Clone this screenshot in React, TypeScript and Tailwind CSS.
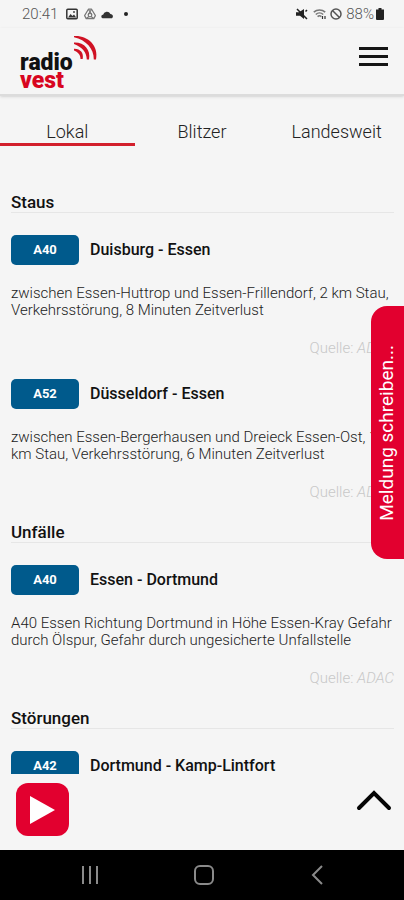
import { useState } from "react";

type Report = {
  road: string;
  route: string;
  text?: string;
};

type Section = {
  title: string;
  reports: Report[];
};

const tabs = ["Lokal", "Blitzer", "Landesweit"];

const sections: Section[] = [
  {
    title: "Staus",
    reports: [
      {
        road: "A40",
        route: "Duisburg - Essen",
        text: "zwischen Essen-Huttrop und Essen-Frillendorf, 2 km Stau, Verkehrsstörung, 8 Minuten Zeitverlust",
      },
      {
        road: "A52",
        route: "Düsseldorf - Essen",
        text: "zwischen Essen-Bergerhausen und Dreieck Essen-Ost, 1 km Stau, Verkehrsstörung, 6 Minuten Zeitverlust",
      },
    ],
  },
  {
    title: "Unfälle",
    reports: [
      {
        road: "A40",
        route: "Essen - Dortmund",
        text: "A40 Essen Richtung Dortmund in Höhe Essen-Kray Gefahr durch Ölspur, Gefahr durch ungesicherte Unfallstelle",
      },
    ],
  },
  {
    title: "Störungen",
    reports: [{ road: "A42", route: "Dortmund - Kamp-Lintfort" }],
  },
];

function StatusBar() {
  return (
    <div className="flex h-7 shrink-0 items-center justify-between pl-[22px] pr-5 text-[15px] font-light text-[#555]">
      <div className="flex items-center">
        <span>20:41</span>
        <svg className="ml-2 h-3 w-3" viewBox="0 0 12 12" aria-hidden="true">
          <rect x="0.8" y="1.3" width="10.4" height="9.4" rx="1" fill="none" stroke="#333" strokeWidth="1.5" />
          <path d="M2 9.5 4.6 6l1.8 2 1.6-1.6 2.2 3.1z" fill="#333" />
          <circle cx="8" cy="4" r="0.9" fill="#333" />
        </svg>
        <svg className="ml-[6px] h-3 w-3" viewBox="0 0 12 12" fill="none" stroke="#777" strokeWidth="1.2" aria-hidden="true">
          <path d="M4.4 1.2h3.2l3.8 6.4-1.6 3H2.2l-1.6-3z" strokeLinejoin="round" />
          <circle cx="6" cy="7" r="1.8" />
          <path d="M4.4 1.2 7.8 7M7.6 1.2 4.2 7M2.2 10.6 5 8.5M9.8 10.6 7 8.5" />
        </svg>
        <svg className="ml-[5px] h-3 w-[13px]" viewBox="0 0 13 12" fill="#333" aria-hidden="true">
          <path d="M1.5 10.200a1.800 1.800 0 0 1 .6-3.500 3.900 3.900 0 0 1 7.300-.8 2.400 2.400 0 0 1 1.600 4.300z" />
        </svg>
        <span className="ml-[10px] h-1 w-1 rounded-full bg-[#222]" />
      </div>
      <div className="flex items-center">
        <svg className="h-3 w-3" viewBox="0 0 12 12" aria-hidden="true">
          <path d="M0 4.2h3L8 1v10L4 7.800H0z" fill="#222" />
          <path d="M1 1l10 10M9.5 3.5 11 2" stroke="#222" strokeWidth="1.5" />
        </svg>
        <svg className="ml-[5px] h-3 w-[14px]" viewBox="0 0 14 12" fill="none" stroke="#777" strokeWidth="1.6" aria-hidden="true">
          <path d="M.8 4.2a8.5 8.5 0 0 1 11.4 0M2.8 6.5a5.4 5.4 0 0 1 7.4 0M4.6 8.6a2.8 2.8 0 0 1 3.8 0" />
          <path d="M9.5 8v3M12 8v3" stroke="#333" strokeWidth="1.2" />
        </svg>
        <svg className="ml-[3px] h-3 w-3" viewBox="0 0 12 12" fill="none" stroke="#555" strokeWidth="1.5" aria-hidden="true">
          <circle cx="6" cy="6" r="5" />
          <path d="m2.5 2.5 7 7" />
        </svg>
        <span className="ml-1">88%</span>
        <svg className="ml-[2px] h-3 w-2" viewBox="0 0 8 12" fill="#222" aria-hidden="true">
          <path d="M2.5 0h3v1.5H8V11a1 1 0 0 1-1 1H1a1 1 0 0 1-1-1V1.5h2.5z" />
        </svg>
      </div>
    </div>
  );
}

function Logo() {
  return (
    <a href="#start" aria-label="radio vest" className="flex items-start">
      <span className="flex w-[55px] flex-col pt-[19px] text-[23px] font-black leading-[18px] text-[#111]">
        <span>radio</span>
        <span className="text-[#d8051f]">vest</span>
      </span>
      <svg className="-ml-1 h-7 w-7" viewBox="0 0 28 28" fill="#d01224" aria-hidden="true">
        <path d="M3 1C16 0 28 10 25 24.500h-2.200C23 13.500 15 5 3 2.200z" />
        <path d="M3 7.500c10-.5 17 7 15 17h-2.200C15.500 17 11 12 3 9z" />
        <path d="M3 13.800c6-.3 10 4 8.700 10.200H9.500c0-4-2-6.800-6.500-8.500z" />
      </svg>
    </a>
  );
}

function ReportItem({ report }: { report: Report }) {
  return (
    <article className="mb-[22px]">
      <div className="flex items-center gap-[11px]">
        <span className="flex h-[30px] w-[68px] shrink-0 items-center justify-center rounded-[5px] bg-[#005a8c] text-[13px] font-bold text-white">
          {report.road}
        </span>
        <h3 className="text-[16px] font-medium text-[#111]">{report.route}</h3>
      </div>
      {report.text && (
        <>
          <p className="mt-5 text-[15px] font-light leading-[17px] text-[#222]">{report.text}</p>
          <p className="mt-5 text-right text-[15px] font-light leading-[18px] text-[#c8c8c8]">
            Quelle: <em>ADAC</em>
          </p>
        </>
      )}
    </article>
  );
}

export default function App() {
  const [active, setActive] = useState("Lokal");

  return (
    <div className="relative flex h-screen flex-col bg-[#f5f5f5] font-['Roboto',sans-serif]">
      <StatusBar />

      <header className="flex h-[68px] shrink-0 items-start justify-between border-b-2 border-[#dcdcdc] pl-5 pr-4 pt-[7px] shadow-sm">
        <Logo />
        <button type="button" aria-label="Menü" className="mt-3 flex w-[29px] flex-col gap-[5px]">
          <span className="h-[3px] w-full bg-[#151515]" />
          <span className="h-[3px] w-full bg-[#151515]" />
          <span className="h-[3px] w-full bg-[#151515]" />
        </button>
      </header>

      <main className="min-h-0 flex-1 overflow-hidden">
        <nav className="grid grid-cols-3 pt-5">
          {tabs.map((tab) => (
            <button
              key={tab}
              type="button"
              onClick={() => setActive(tab)}
              className={`h-[30px] border-b-[3px] pt-1 text-[18px] font-light leading-6 text-[#222] ${
                active === tab ? "border-[#d3202c]" : "border-transparent"
              }`}
            >
              {tab}
            </button>
          ))}
        </nav>

        <div className="pl-[11px] pr-[10px] pt-[47px]">
          {sections.map((section) => (
            <section key={section.title}>
              <h2 className="mb-[22px] border-b border-[#e6e6e6] text-[17px] font-medium leading-[19px] text-[#111]">
                {section.title}
              </h2>
              {section.reports.map((report) => (
                <ReportItem key={report.route} report={report} />
              ))}
            </section>
          ))}
        </div>
      </main>

      <footer className="flex h-[76px] shrink-0 items-start justify-between pl-4 pr-3 pt-[9px]">
        <button
          type="button"
          aria-label="Abspielen"
          className="flex h-[53px] w-[53px] items-center justify-center rounded-xl bg-[#e2002f]"
        >
          <svg className="h-[30px] w-[27px]" viewBox="0 0 27 30" fill="#fff" aria-hidden="true">
            <path d="M1 1v28l25-14z" />
          </svg>
        </button>
        <button type="button" aria-label="Nach oben" className="mt-[6px]">
          <svg
            className="h-[22px] w-9"
            viewBox="0 0 36 22"
            fill="none"
            stroke="#050505"
            strokeWidth="4"
            strokeLinecap="round"
            aria-hidden="true"
          >
            <path d="m3 19 15-15 15 15" />
          </svg>
        </button>
      </footer>

      <nav className="flex h-[50px] shrink-0 items-center justify-around bg-black pl-[34px] pr-[31px] text-[#8a8a8a]">
        <button type="button" aria-label="Letzte Apps">
          <svg className="h-5 w-5" viewBox="0 0 20 20" stroke="currentColor" strokeWidth="2" aria-hidden="true">
            <path d="M2 1v18M9 1v18M16 1v18" />
          </svg>
        </button>
        <button type="button" aria-label="Startbildschirm">
          <svg className="h-5 w-5" viewBox="0 0 20 20" fill="none" stroke="currentColor" strokeWidth="2" aria-hidden="true">
            <rect x="1" y="1" width="18" height="18" rx="5" />
          </svg>
        </button>
        <button type="button" aria-label="Zurück">
          <svg className="h-5 w-5" viewBox="0 0 20 20" fill="none" stroke="currentColor" strokeWidth="2" aria-hidden="true">
            <path d="M15 1 6 10l9 9" />
          </svg>
        </button>
      </nav>

      {/* sits over the list at the right edge */}
      <button
        type="button"
        className="absolute right-0 top-[306px] flex h-[253px] w-[33px] items-center justify-center rounded-l-2xl bg-[#e2002f] text-white"
      >
        <span className="rotate-180 whitespace-nowrap text-[19px] [writing-mode:vertical-rl]">
          Meldung schreiben...
        </span>
      </button>
    </div>
  );
}
